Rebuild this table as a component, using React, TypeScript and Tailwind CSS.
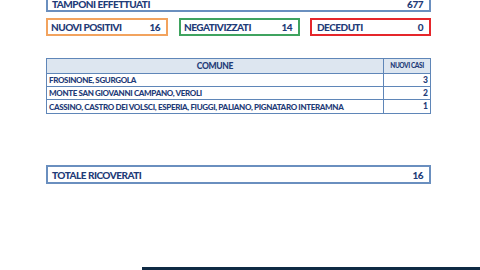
import React from "react";

const font = { fontFamily: "Lato, 'Liberation Sans', sans-serif" };

export default function App() {
  const rows = [
    ["FROSINONE, SGURGOLA", "3"],
    ["MONTE SAN GIOVANNI CAMPANO, VEROLI", "2"],
    ["CASSINO, CASTRO DEI VOLSCI, ESPERIA, FIUGGI, PALIANO, PIGNATARO INTERAMNA", "1"],
  ];
  return (
    <div className="w-[480px] h-[270px] overflow-hidden bg-white flex flex-col text-[#1f3c78] font-black" style={font}>
      <div className="pl-[46px] w-[431px] flex flex-col">
        <div className="mt-[-9px] h-[21px] border-2 border-[#6a8fbf] flex items-end justify-between pl-[4px] pr-[6px] pb-[1px] text-[10px] leading-none tracking-[-0.5px]">
          <span>TAMPONI EFFETTUATI</span>
          <span>677</span>
        </div>
        <div className="mt-[6px] flex h-[18px] text-[10px] leading-none tracking-[-0.5px]">
          <div className="w-[122px] border-2 border-[#f2a35e] flex items-center justify-between pl-[3px] pr-[6px]">
            <span>NUOVI POSITIVI</span><span>16</span>
          </div>
          <div className="ml-[11px] w-[121px] border-2 border-[#3fa35f] flex items-center justify-between pl-[3px] pr-[6px]">
            <span>NEGATIVIZZATI</span><span>14</span>
          </div>
          <div className="ml-[10px] w-[121px] border-2 border-[#e5262b] flex items-center justify-between pl-[5px] pr-[6px]">
            <span>DECEDUTI</span><span>0</span>
          </div>
        </div>
        <div className="mt-[22px] border border-[#5f86b8] flex flex-col">
          <div className="h-[15px] flex bg-[#dde6f0] border-b border-[#5f86b8]">
            <div className="flex-1 flex items-center justify-center text-[8.5px] tracking-[-0.3px] leading-none">COMUNE</div>
            <div className="w-[47px] border-l border-[#5f86b8] flex items-center justify-center text-[6.5px] tracking-[-0.4px] leading-none">NUOVI CASI</div>
          </div>
          {rows.map((r, i) => (
            <div key={i} className={`h-[13px] flex ${i < rows.length - 1 ? "border-b border-[#5f86b8]" : ""}`}>
              <div className="flex-1 flex items-center pl-[2px] text-[8px] tracking-[-0.35px] leading-none">{r[0]}</div>
              <div className="w-[47px] border-l border-[#5f86b8] flex items-center justify-end pr-[2px] text-[8.5px] leading-none">{r[1]}</div>
            </div>
          ))}
        </div>
        <div className="mt-[51px] h-[19px] border-2 border-[#6a8fbf] flex items-center justify-between pl-[4px] pr-[6px] text-[10px] leading-none tracking-[-0.5px]">
          <span>TOTALE RICOVERATI</span>
          <span>16</span>
        </div>
      </div>
      <div className="mt-[83px] ml-[142px] h-[4px] bg-[#0f2a44]" />
    </div>
  );
}
